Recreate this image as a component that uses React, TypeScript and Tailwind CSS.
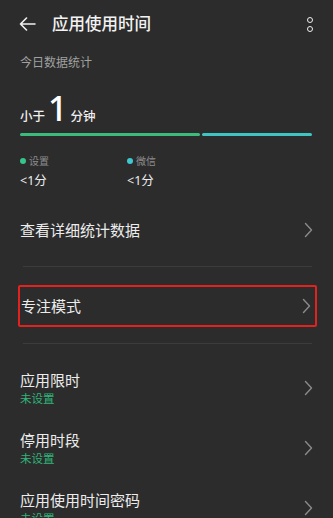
import React from "react";

const Chevron = () => (
  <svg width="9" height="16" viewBox="0 0 9 16" fill="none">
    <path d="M1.5 1.5 L7.5 8 L1.5 14.5" stroke="#8a8a8a" strokeWidth="1.4" strokeLinecap="round" strokeLinejoin="round" />
  </svg>
);

const Row = ({ title, sub }: { title: string; sub?: string }) => (
  <div className="flex items-center justify-between pr-[20px]">
    <div className="flex flex-col">
      <span className="text-[15px] leading-[22px] text-[#ececec]">{title}</span>
      {sub && <span className="text-[11.5px] leading-[16px] text-[#2fb47a]">{sub}</span>}
    </div>
    <Chevron />
  </div>
);

export default function App() {
  return (
    <div
      className="w-[333px] h-[518px] overflow-hidden bg-[#2c2c2c] text-white"
      style={{ fontFamily: '"Noto Sans", "Noto Sans CJK SC", sans-serif' }}
    >
      <div className="flex items-center h-[48px] pl-[19px] pr-[20px]">
        <svg width="17" height="14" viewBox="0 0 17 14" fill="none">
          <path d="M16 7 H1.5 M7.5 1 L1.5 7 L7.5 13" stroke="#f0f0f0" strokeWidth="1.6" strokeLinecap="round" strokeLinejoin="round" />
        </svg>
        <span className="ml-[16px] text-[16.5px] font-medium text-[#f2f2f2]">应用使用时间</span>
        <div className="ml-auto flex flex-col gap-[3px]">
          <span className="w-[6px] h-[6px] rounded-full border-[1.6px] border-[#eeeeee]" />
          <span className="w-[6px] h-[6px] rounded-full border-[1.6px] border-[#eeeeee]" />
        </div>
      </div>

      <div className="pl-[20px] pr-[21px]">
        <div className="mt-[7px] text-[12px] leading-[16px] text-[#a0a0a0]">今日数据统计</div>
        <div className="mt-[20px] flex items-baseline h-[34px]">
          <span className="text-[12.5px] font-medium text-[#f0f0f0]">小于</span>
          <span className="ml-[3px] text-[34px] leading-[34px] font-medium text-white">1</span>
          <span className="ml-[3px] text-[12.5px] font-medium text-[#f0f0f0]">分钟</span>
        </div>
        <div className="mt-[8px] flex gap-[2px] h-[3px]">
          <div className="w-[180px] bg-[#3cbc7c] rounded-full" />
          <div className="flex-1 bg-[#3ec5c2] rounded-full" />
        </div>
        <div className="mt-[18px] flex">
          <div className="w-[107px] flex flex-col">
            <div className="flex items-center gap-[3px]">
              <span className="w-[6px] h-[6px] rounded-full bg-[#35c48a]" />
              <span className="text-[10px] leading-[14px] text-[#8c8c8c]">设置</span>
            </div>
            <span className="mt-[5px] text-[12.5px] leading-[16px] text-[#ececec]">&lt;1分</span>
          </div>
          <div className="flex flex-col">
            <div className="flex items-center gap-[3px]">
              <span className="w-[6px] h-[6px] rounded-full bg-[#3ec8d0]" />
              <span className="text-[10px] leading-[14px] text-[#8c8c8c]">微信</span>
            </div>
            <span className="mt-[5px] text-[12.5px] leading-[16px] text-[#ececec]">&lt;1分</span>
          </div>
        </div>
      </div>

      <div className="pl-[20px] mt-[30px]">
        <Row title="查看详细统计数据" />
      </div>
      <div className="ml-[23px] mr-[21px] mt-[25px] h-px bg-[#3c3c3c]" />

      <div className="ml-[18px] mr-[16px] mt-[18px] h-[42px] border-2 border-[#e3221f] rounded-[2px] flex items-center">
        <div className="flex-1 flex items-center justify-between pl-[1px] pr-[4px]">
          <span className="text-[15px] leading-[22px] text-[#ececec]">专注模式</span>
          <Chevron />
        </div>
      </div>
      <div className="ml-[23px] mr-[21px] mt-[16px] h-px bg-[#3c3c3c]" />

      <div className="pl-[20px] mt-[25px] flex flex-col gap-[22px]">
        <Row title="应用限时" sub="未设置" />
        <Row title="停用时段" sub="未设置" />
        <Row title="应用使用时间密码" sub="未设置" />
      </div>
    </div>
  );
}
